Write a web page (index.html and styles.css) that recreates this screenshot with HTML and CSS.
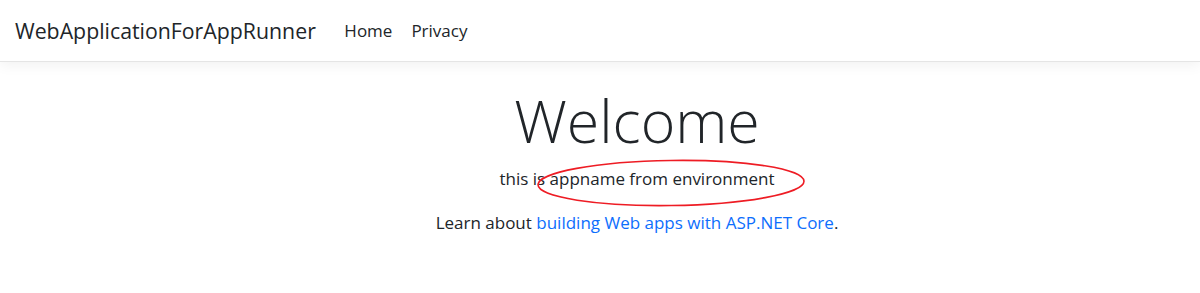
FILE: index.html
```html
<!DOCTYPE html>
<html lang="en">
<head>
  <meta charset="UTF-8">
  <meta name="viewport" content="width=device-width, initial-scale=1.0">
  <title>Home Page - WebApplicationForAppRunner</title>
  <link rel="stylesheet" href="styles.css">
</head>
<body>
<header>
  <nav class="navbar">
    <a class="navbar-brand" href="#">WebApplicationForAppRunner</a>
    <ul class="navbar-nav">
      <li><a class="nav-link" href="#">Home</a></li>
      <li><a class="nav-link" href="#">Privacy</a></li>
    </ul>
  </nav>
</header>
<main class="container">
  <div class="text-center">
    <h1 class="display-4">Welcome</h1>
    <p><span class="appname">this is appname from environment<svg class="mark" width="272" height="52" viewBox="0 0 272 52">
        <ellipse cx="136" cy="26" rx="133" ry="22.5" transform="rotate(-0.8 136 26)" fill="none" stroke="#ee1c24" stroke-width="1.6"/>
      </svg></span></p>
    <p>Learn about <a href="#">building Web apps with ASP.NET Core</a>.</p>
  </div>
</main>
</body>
</html>
```

FILE: styles.css
```css
body {
  margin: 0;
  font-family: "Open Sans", "Noto Sans", sans-serif;
  font-size: 17px;
  color: #212529;
  background: #fff;
}
a {
  color: #0d6efd;
  text-decoration: none;
}
.navbar {
  display: flex;
  align-items: center;
  height: 61px;
  padding: 0 15px;
  border-bottom: 1px solid #e5e5e5;
  box-shadow: 0 4px 12px rgba(0, 0, 0, 0.05);
}
.navbar-brand {
  font-size: 21.3px;
  color: #212529;
  margin-right: 19px;
}
.navbar-nav {
  display: flex;
  list-style: none;
  margin: 0;
  padding: 0;
}
.nav-link {
  display: block;
  padding: 8px 9.5px;
  color: #212529;
}
.container {
  padding-left: 74px;
}
.text-center {
  text-align: center;
}
.display-4 {
  font-size: 59px;
  font-weight: 300;
  line-height: 1.2;
  margin: 23px 0 10px;
}
p {
  margin: 0 0 18px;
  line-height: 26px;
}
.appname {
  position: relative;
}
.mark {
  position: absolute;
  left: 36px;
  top: -10px;
}
```
